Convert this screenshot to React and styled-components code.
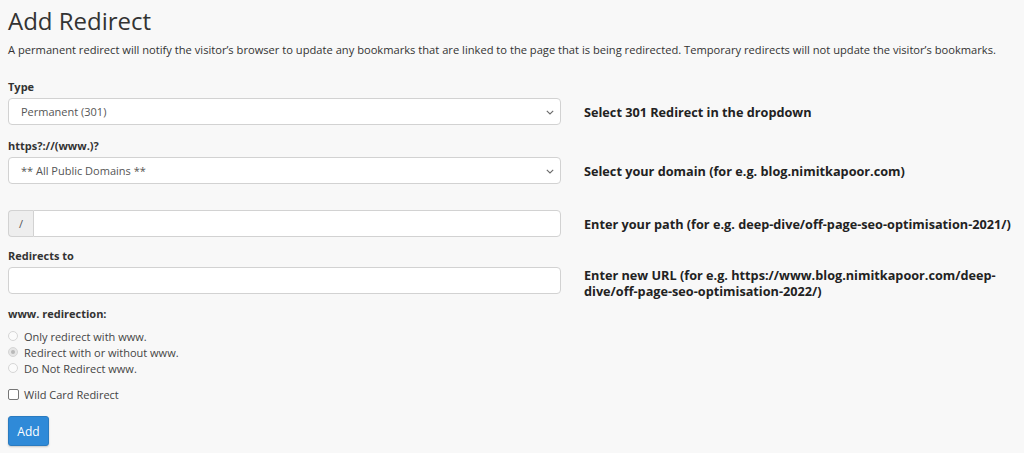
import React from 'react';
import styled, { createGlobalStyle } from 'styled-components';

const GlobalStyle = createGlobalStyle`
    html, body {
        margin: 0;
        padding: 0;
        background-color: #f8f8f8;
    }
    body {
        font-family: 'Open Sans', 'Liberation Sans', sans-serif;
        color: #333333;
    }
`

const hints = {
    type: 'Select 301 Redirect in the dropdown',
    domain: 'Select your domain (for e.g. blog.nimitkapoor.com)',
    path: 'Enter your path (for e.g. deep-dive/off-page-seo-optimisation-2021/)',
    url: 'Enter new URL (for e.g. https://www.blog.nimitkapoor.com/deep-dive/off-page-seo-optimisation-2022/)',
}

const radios = [
    { label: 'Only redirect with www.', checked: false },
    { label: 'Redirect with or without www.', checked: true },
    { label: 'Do Not Redirect www.', checked: false },
]

function Chevron(){
    return(
        <ArrowIcon width="8" height="5" viewBox="0 0 8 5">
            <path d="M0.8 0.8 L4 4 L7.2 0.8" fill="none" stroke="#6a6a6a" strokeWidth="1.1" />
        </ArrowIcon>
    )
}

export default function App(){
    return(
        <Pagina>
            <GlobalStyle />
            <Titulo>Add Redirect</Titulo>
            <Descricao>
                A permanent redirect will notify the visitor’s browser to update any bookmarks that are linked to the page that is being redirected. Temporary redirects will not update the visitor’s bookmarks.
            </Descricao>

            <Campo>
                <Rotulo>Type</Rotulo>
                <Linha>
                    <SelectBox>
                        <span>Permanent (301)</span>
                        <Chevron />
                    </SelectBox>
                    <Dica>{hints.type}</Dica>
                </Linha>
            </Campo>

            <Campo>
                <Rotulo>https?://(www.)?</Rotulo>
                <Linha>
                    <SelectBox>
                        <span>** All Public Domains **</span>
                        <Chevron />
                    </SelectBox>
                    <Dica>{hints.domain}</Dica>
                </Linha>
            </Campo>

            <Campo $top={26}>
                <Linha>
                    <InputGroup>
                        <Prefixo>/</Prefixo>
                        <InputBox $joined />
                    </InputGroup>
                    <Dica>{hints.path}</Dica>
                </Linha>
            </Campo>

            <Campo $top={11}>
                <Rotulo>Redirects to</Rotulo>
                <Linha>
                    <InputBox />
                    <Dica $shift={1.5}>{hints.url}</Dica>
                </Linha>
            </Campo>

            <Campo $top={12}>
                <Rotulo>www. redirection:</Rotulo>
                <ListaOpcoes>
                    {radios.map((r) => (
                        <Opcao key={r.label}>
                            <Radio $checked={r.checked} />
                            {r.label}
                        </Opcao>
                    ))}
                </ListaOpcoes>
            </Campo>

            <CheckLinha>
                <Caixa />
                Wild Card Redirect
            </CheckLinha>

            <Botao>Add</Botao>
        </Pagina>
    )
}

const Pagina=styled.div`
    box-sizing: border-box;
    width: 1024px;
    min-height: 453px;
    padding: 0 8px;
    background-color: #f8f8f8;
`
const Titulo=styled.h1`
    margin: 3px 0 0;
    font-size: 24px;
    font-weight: 400;
    line-height: 35px;
    color: #333333;
`
const Descricao=styled.p`
    margin: 4px 0 22px;
    font-size: 11.15px;
    line-height: 15px;
    color: #333333;
`
const Campo=styled.div`
    margin-top: ${props => props.$top ?? 13}px;

    &:first-of-type{
        margin-top: 0;
    }
`
const Rotulo=styled.div`
    font-size: 11px;
    font-weight: 700;
    line-height: 16px;
    margin-bottom: 3px;
    color: #333333;
`
const Linha=styled.div`
    display: grid;
    grid-template-columns: 553px 1fr;
    grid-template-rows: 27px;
    column-gap: 23px;
    align-items: center;
`
const SelectBox=styled.div`
    position: relative;
    box-sizing: border-box;
    height: 27px;
    display: flex;
    align-items: center;
    padding: 0 12px;
    background-color: #ffffff;
    border: 1px solid #d2d2d2;
    border-radius: 4px;
    font-size: 11px;
    color: #555555;
`
const ArrowIcon=styled.svg`
    position: absolute;
    right: 6px;
    top: 11px;
`
const InputGroup=styled.div`
    display: flex;
    height: 27px;
`
const Prefixo=styled.div`
    box-sizing: border-box;
    width: 25px;
    display: flex;
    align-items: center;
    justify-content: center;
    background-color: #eeeeee;
    border: 1px solid #d2d2d2;
    border-right: none;
    border-radius: 4px 0 0 4px;
    font-size: 11px;
    color: #555555;
`
const InputBox=styled.div`
    box-sizing: border-box;
    flex: 1;
    height: 27px;
    background-color: #ffffff;
    border: 1px solid #d2d2d2;
    border-radius: ${props => props.$joined ? '0 4px 4px 0' : '4px'};
`
const Dica=styled.div`
    font-size: 12.7px;
    font-weight: 700;
    line-height: 16px;
    color: #222222;
    transform: translateY(${props => props.$shift ?? 0}px);
`
const ListaOpcoes=styled.div`
    display: flex;
    flex-direction: column;
    margin-top: 6px;
`
const Opcao=styled.div`
    display: flex;
    align-items: center;
    gap: 6px;
    height: 16px;
    font-size: 11px;
    color: #444444;
`
const Radio=styled.span`
    box-sizing: border-box;
    width: 10px;
    height: 10px;
    margin-left: 0;
    border-radius: 50%;
    border: 1px solid #d6d6d6;
    background-color: ${props => props.$checked ? '#e6e6e6' : '#fbfbfb'};
    display: flex;
    align-items: center;
    justify-content: center;

    &::after{
        content: '';
        width: 4px;
        height: 4px;
        border-radius: 50%;
        background-color: ${props => props.$checked ? '#b9b9b9' : 'transparent'};
    }
`
const CheckLinha=styled.div`
    display: flex;
    align-items: center;
    gap: 5px;
    height: 16px;
    margin-top: 10px;
    font-size: 11px;
    color: #444444;
`
const Caixa=styled.span`
    box-sizing: border-box;
    width: 11px;
    height: 11px;
    border: 1px solid #767676;
    border-radius: 2px;
    background-color: #ffffff;
`
const Botao=styled.button`
    display: block;
    margin-top: 14px;
    width: 41px;
    height: 30px;
    padding: 0;
    border: 1px solid #2a7bc0;
    border-radius: 3px;
    background-color: #2f8ad8;
    box-shadow: 0 1px 2px rgba(0, 0, 0, 0.2);
    font-family: 'Open Sans', 'Liberation Sans', sans-serif;
    font-size: 12px;
    color: #ffffff;
`
